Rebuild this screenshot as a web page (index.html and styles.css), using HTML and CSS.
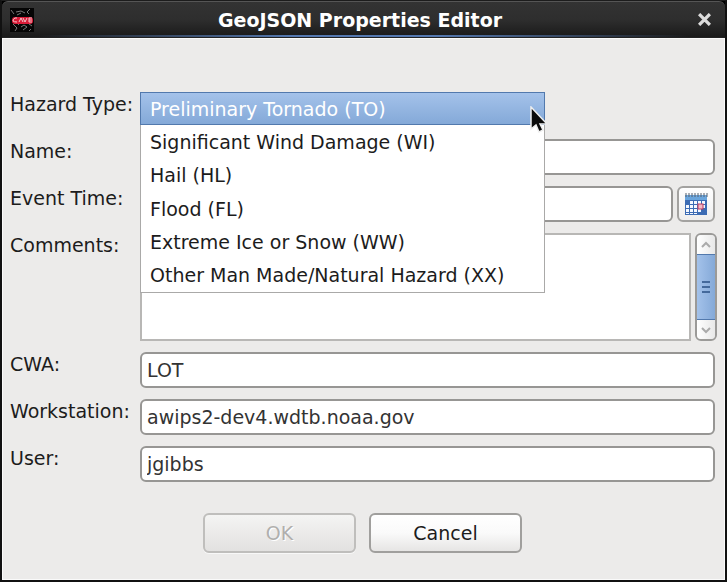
FILE: index.html
```
<!DOCTYPE html>
<html lang="en">
<head>
    <meta charset="UTF-8">
    <meta name="viewport" content="width=device-width, initial-scale=1.0">
    <title>GeoJSON Properties Editor</title>
    <link rel="stylesheet" href="styles.css">
</head>
<body>
    <div class="window">
        <header class="titlebar">
            <svg class="app-icon" viewBox="0 0 24 24" aria-hidden="true">
                <rect width="24" height="24" fill="#050505"/>
                <path d="M1 2l3 4M20 1l-3 3 2 2M6 4l5-1 4 2M3 16l4 4-2 3M11 19l3-2 3 2-4 3M19 16l3 2M7 7l4-2M9 17l-2-2M21 21l-2 2" stroke="#777" stroke-width="1" fill="none"/>
                <rect x="2" y="9" width="21" height="7" rx="3" fill="#d81c38"/>
                <path d="M7 10H5Q3 11 3 13Q4 14 7 14M9 14l2-4 2 4M13 10l2 4 2-4M22 10h-3v4h3M19 12h3" stroke="#f3c4ca" stroke-width="1" fill="none"/>
            </svg>
            <h1>GeoJSON Properties Editor</h1>
            <button type="button" class="close-btn" aria-label="Close">
                <svg viewBox="0 0 12 12" aria-hidden="true">
                    <path d="M1 1L11 11M11 1L1 11" stroke="#dcdcdc" stroke-width="3"/>
                </svg>
            </button>
        </header>

        <form class="editor">
            <div class="row">
                <label for="hazard-type">Hazard Type:</label>
                <div class="field">
                    <select id="hazard-type">
                        <option>Preliminary Tornado (TO)</option>
                        <option>Significant Wind Damage (WI)</option>
                        <option>Hail (HL)</option>
                        <option>Flood (FL)</option>
                        <option>Extreme Ice or Snow (WW)</option>
                        <option>Other Man Made/Natural Hazard (XX)</option>
                    </select>
                    <ul class="menu" role="listbox" aria-label="Hazard Type">
                        <li class="selected" role="option" aria-selected="true">Preliminary Tornado (TO)</li>
                        <li role="option">Significant Wind Damage (WI)</li>
                        <li role="option">Hail (HL)</li>
                        <li role="option">Flood (FL)</li>
                        <li role="option">Extreme Ice or Snow (WW)</li>
                        <li role="option">Other Man Made/Natural Hazard (XX)</li>
                    </ul>
                    <svg class="pointer" viewBox="0 0 18 27" aria-hidden="true">
                        <path d="M1 1V23L6 19L9 26L13 24L10 18H17Z" fill="#0a0a0a" stroke="#eee" stroke-width="1.5"/>
                    </svg>
                </div>
            </div>
            <div class="row">
                <label for="name">Name:</label>
                <div class="field"><input type="text" id="name"></div>
            </div>
            <div class="row">
                <label for="event-time">Event Time:</label>
                <div class="field">
                    <input type="text" id="event-time">
                    <button type="button" class="calendar-btn" aria-label="Choose date">
                        <svg viewBox="0 0 24 24" aria-hidden="true">
                            <rect x="1" y="3" width="22" height="20" fill="#3c6cb4"/>
                            <rect x="1" y="3" width="22" height="5" fill="#6aa5dc"/>
                            <path d="M2 1v4M5 1v4M8 1v4M11 1v4M14 1v4M17 1v4M20 1v4M23 1v4" stroke="#56606e" stroke-width="1"/>
                            <path d="M6 9h3v3H6zM10 9h3v3h-3zM14 9h3v3h-3zM18 9h3v3h-3zM2 13h3v3H2zM6 13h3v3H6zM10 13h3v3h-3zM18 13h3v3h-3zM2 17h3v3H2zM6 17h3v3H6zM10 17h3v3h-3zM14 17h3v3h-3zM2 21h3v1H2zM6 21h3v1H6zM10 21h3v1h-3z" fill="#f4f8ff"/>
                            <rect x="14" y="12" width="5" height="5" fill="#f3b9c6" stroke="#c0395c"/>
                        </svg>
                    </button>
                </div>
            </div>
            <div class="row">
                <label for="comments">Comments:</label>
                <div class="field comments">
                    <textarea id="comments"></textarea>
                    <div class="scrollbar">
                        <button type="button" aria-label="Scroll up">
                            <svg viewBox="0 0 12 8" aria-hidden="true"><path d="M2 6l4-4 4 4" fill="none" stroke="#aaa" stroke-width="2"/></svg>
                        </button>
                        <div class="thumb"><span></span><span></span><span></span></div>
                        <button type="button" aria-label="Scroll down">
                            <svg viewBox="0 0 12 8" aria-hidden="true"><path d="M2 2l4 4 4-4" fill="none" stroke="#aaa" stroke-width="2"/></svg>
                        </button>
                    </div>
                </div>
            </div>
            <div class="row">
                <label for="cwa">CWA:</label>
                <div class="field"><input type="text" id="cwa" value="LOT"></div>
            </div>
            <div class="row">
                <label for="workstation">Workstation:</label>
                <div class="field"><input type="text" id="workstation" value="awips2-dev4.wdtb.noaa.gov"></div>
            </div>
            <div class="row">
                <label for="user">User:</label>
                <div class="field"><input type="text" id="user" value="jgibbs"></div>
            </div>
            <div class="buttons">
                <button type="submit" disabled>OK</button>
                <button type="button">Cancel</button>
            </div>
        </form>
    </div>
</body>
</html>
```
FILE: styles.css
```
* {
    box-sizing: border-box;
}

body {
    margin: 0;
    background: #000;
    color: #1c1c1c;
    font: 19px/24px "DejaVu Sans", sans-serif;
}

.window {
    display: flex;
    flex-direction: column;
    min-height: 100vh;
    border: 2px solid #111;
    border-top: 1px solid #1c1c1c;
}

.titlebar {
    position: relative;
    display: flex;
    align-items: center;
    height: 37px;
    padding: 0 14px 0 8px;
    border-top: 1px solid #555;
    border-bottom: 1px solid #222;
    border-radius: 6px 6px 0 0;
    background: linear-gradient(#333, #2e2e2e 50%, #1a1a1a);
}

/* blue highlight along the bottom edge */
.titlebar::after {
    content: "";
    position: absolute;
    left: 0;
    right: 0;
    bottom: 0;
    height: 2px;
    background: linear-gradient(90deg, transparent 5%, #5478b0 40%, #5478b0 60%, transparent 95%);
}

.titlebar h1 {
    flex: 1;
    margin: 0;
    padding-right: 12px;
    color: #fff;
    font-size: 19px;
    text-align: center;
}

.app-icon {
    width: 24px;
    height: 24px;
}

.close-btn {
    display: flex;
    padding: 0;
    border: none;
    background: none;
}

.close-btn svg {
    width: 13px;
    height: 13px;
}

.editor {
    flex: 1;
    display: flex;
    flex-direction: column;
    gap: 11px;
    padding: 53px 9px 26px 7px;
    border: 1px solid #fafafa;
    background: #ecebea;
}

.row {
    display: grid;
    grid-template-columns: 130px 1fr;
    align-items: start;
}

.field {
    position: relative;
    display: flex;
    gap: 4px;
    min-width: 0;
}

input,
textarea,
select {
    flex: 1;
    min-width: 0;
    height: 36px;
    margin: 0;
    padding: 0 5px;
    border: 2px solid #979694;
    border-radius: 6px;
    background: #fff;
    color: #333;
    font: inherit;
}

select {
    flex: none;
    width: 405px;
    max-width: 100%;
}

.menu {
    position: absolute;
    top: 0;
    left: 0;
    z-index: 1;
    display: grid;
    grid-template-rows: repeat(6, 1fr);
    width: 405px;
    max-width: 100%;
    height: 201px;
    margin: 0;
    padding: 0;
    border: 1px solid #aaa9a8;
    border-top: none;
    background: #fff;
    list-style: none;
}

.menu li {
    display: flex;
    align-items: center;
    padding: 0 9px;
}

.menu .selected {
    margin: 0 -1px;
    border: 1px solid #5279ad;
    background: linear-gradient(#a4c2ea, #84a9d8);
    color: #fff;
}

.pointer {
    position: absolute;
    top: 14px;
    left: 390px;
    z-index: 2;
    width: 18px;
    height: 27px;
}

.calendar-btn {
    width: 38px;
    padding: 0;
    border: 2px solid #a3a2a0;
    border-radius: 6px;
    background: linear-gradient(#fff, #eee);
}

.calendar-btn svg {
    display: block;
    width: 24px;
    height: 24px;
    margin: auto;
}

.comments {
    margin-right: -2px;
}

textarea {
    height: 108px;
    border-color: #b8b7b5;
    border-radius: 0;
    resize: none;
}

.scrollbar {
    display: flex;
    flex-direction: column;
    width: 22px;
    border: 2px solid #9b9a98;
    border-radius: 6px;
    overflow: hidden;
    background: #ddd;
}

.scrollbar button {
    height: 19px;
    padding: 0;
    border: none;
    background: linear-gradient(90deg, #fff, #e8e8e8);
}

.scrollbar svg {
    display: block;
    width: 12px;
    height: 8px;
    margin: auto;
}

.thumb {
    flex: 1;
    display: flex;
    flex-direction: column;
    align-items: center;
    justify-content: center;
    gap: 3px;
    margin: 0 -1px;
    border: 1px solid #5279ad;
    background: linear-gradient(90deg, #a4c2ea, #84a9d8);
}

.thumb span {
    width: 8px;
    height: 2px;
    background: #44699b;
}

.buttons {
    display: flex;
    justify-content: center;
    gap: 13px;
    margin-top: 20px;
}

.buttons button {
    width: 153px;
    height: 40px;
    border: 2px solid #a09f9d;
    border-radius: 6px;
    background: linear-gradient(#fff, #fafafa 50%, #e6e5e4);
    color: #1c1c1c;
    font: inherit;
}

.buttons button:disabled {
    border-color: #bfbebc;
    background: linear-gradient(#f4f4f3, #e2e1e0);
    box-shadow: 0 1px #f8f8f8;
    color: #b0afad;
    text-shadow: 1px 1px #fff;
}
```
